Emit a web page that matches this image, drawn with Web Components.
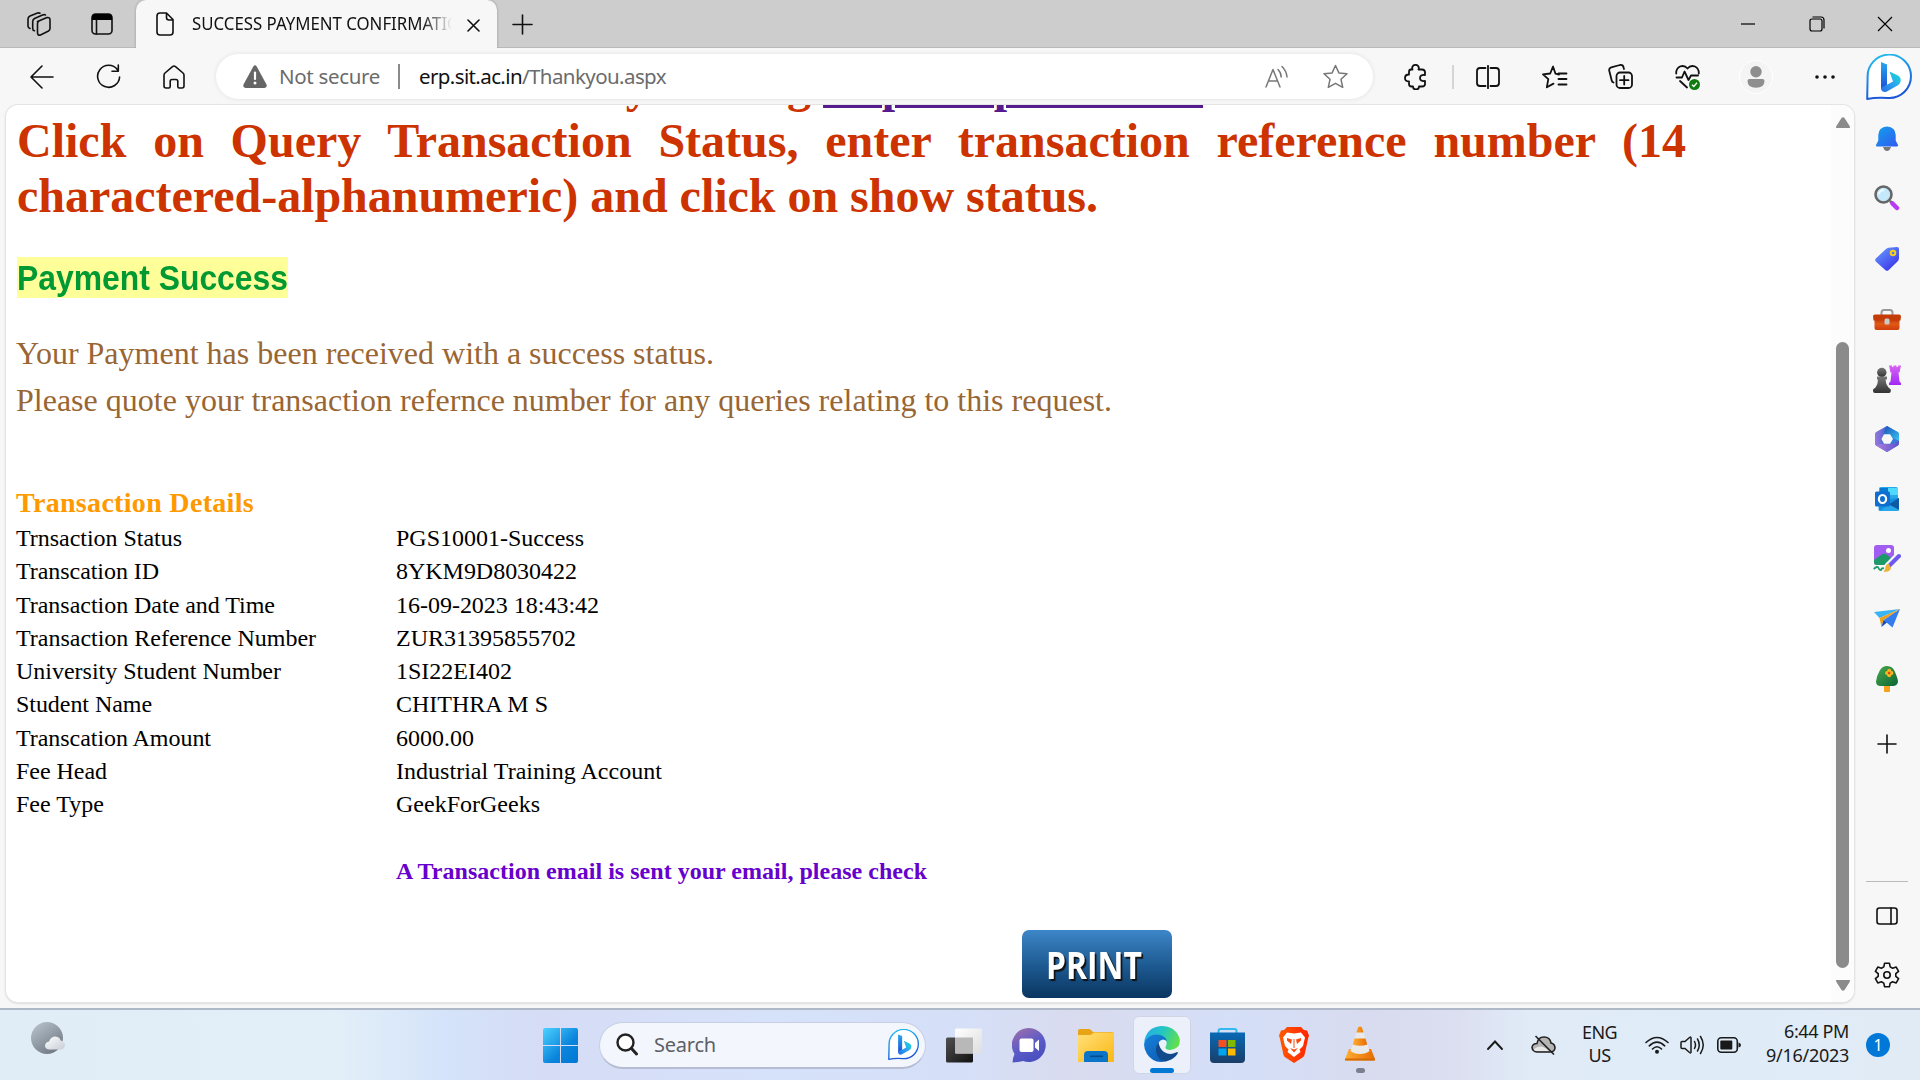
<!DOCTYPE html>
<html lang="en">
<head>
<meta charset="utf-8">
<title>SUCCESS PAYMENT CONFIRMATION</title>
<style>
html,body{margin:0;padding:0;width:1920px;height:1080px;overflow:hidden;background:#f7f7f7}
</style>
</head>
<body>
<desktop-screen></desktop-screen>
<script>
const define = (name, html, ready) => {
  const t = document.createElement('template');
  t.innerHTML = html;
  customElements.define(name, class extends HTMLElement {
    constructor() {
      super();
      this.attachShadow({mode: 'open'}).append(t.content.cloneNode(true));
    }
    connectedCallback() { if (ready) ready(this); }
  });
};

/* ---------- icon artwork ---------- */
const bing = `<defs><linearGradient id="o" x1="0" y1="0" x2=".3" y2="1"><stop offset="0" stop-color="#22c5ee"/><stop offset="1" stop-color="#1b55d8"/></linearGradient><linearGradient id="i" x1="0" y1="0" x2="0" y2="1"><stop offset="0" stop-color="#27a8ee"/><stop offset="1" stop-color="#1b4fd6"/></linearGradient><linearGradient id="j" x1="1" y1="0" x2="0" y2="1"><stop offset="0" stop-color="#1be0d2"/><stop offset=".5" stop-color="#2aa5ee"/><stop offset="1" stop-color="#2a6be8"/></linearGradient></defs>
<path d="M1.2 45 L1.6 23 A21.7 21.7 0 1 1 23 44 C17 43.6 10 43 1.2 45Z" fill="#fff" stroke="url(#o)" stroke-width="2" stroke-linejoin="round"/>
<path d="M15 8 L21 10.5 V31 L15 35.500Z" fill="url(#i)"/><path d="M23.500 17.500 L32 21.500 C36 24 35.500 29 31.500 31.500 L20 38 C17 38.500 15 37 15 34 L27 27.500Z" fill="url(#j)"/>`;
const S = 'fill="none" stroke="#111" stroke-width="1.6" stroke-linecap="round" stroke-linejoin="round"';
const B = 'fill="none" stroke="#111" stroke-width="1.8" stroke-linecap="round" stroke-linejoin="round"';
const ICONS = {
  workspaces: [24,24,`<g ${S}><path d="M10.500 9.500 L20 5.600 Q23 5 23 8 V16.500 Q23 18 21.500 19 L13.500 23 Q10.500 23.800 10.500 20.500 V11.500 Q10.500 10 12 9Z"/><path d="M7.500 18.700 Q5.700 18.500 5.700 16.500 V9.500 Q5.700 7.500 7.500 6.500 L15.500 3 Q17.500 2.200 18.500 3"/><path d="M3 16.500 Q1 16 1 14 V7 Q1 5 3 4 L10.500 1 Q12 .6 13 1.200"/></g>`],
  tabs: [22,22,`<rect x="1" y="1" width="20" height="20" rx="3.500" ${S}/><path d="M1 7V4Q1 1 4 1H18Q21 1 21 4V7Z" fill="#000"/><path d="M5.500 7V21" ${S}/>`],
  doc: [18,24,`<path d="M1 4Q1 1 4 1H10.500L17 7.500V20Q17 23 14 23H4Q1 23 1 20ZM10.500 1V5.500Q10.500 8 13 8H17" ${S}/>`],
  x: [13,13,`<path d="M1 1L12 12M12 1L1 12" ${S}/>`],
  plus: [21,21,`<path d="M10.500 1V20M1 10.500H20" ${S}/>`],
  min: [16,16,`<path d="M1 8H15" stroke="#000" stroke-width="1.200"/>`],
  max: [16,16,`<path d="M1 5Q1 3 3 3H11Q13 3 13 5V13Q13 15 11 15H3Q1 15 1 13ZM3.500 1H12Q15 1 15 4V12.500" fill="none" stroke="#000" stroke-width="1.200"/>`],
  close: [16,16,`<path d="M1 1L15 15M15 1L1 15" stroke="#000" stroke-width="1.200"/>`],
  back: [24,24,`<path d="M23 12H1M12 1L1 12L12 23" ${S}/>`],
  refresh: [25,25,`<path d="M21.500 5.800A11 11 0 1 0 23.600 13M22.300 1V7.200H16" ${S}/>`],
  home: [22,24,`<path d="M1 10.200Q1 9 2 8L9.500 1.600Q11 .4 12.500 1.600L20 8Q21 9 21 10.200V21Q21 23 19 23H16.200Q14.800 23 14.800 21.500V16.500Q14.800 14.500 13 14.500H9Q7.200 14.500 7.200 16.500V21.500Q7.200 23 5.800 23H3Q1 23 1 21Z" ${S}/>`],
  warn: [24,23,`<path d="M10.300 1.400Q12 -1 13.700 1.400L23.500 19.500Q24.500 22.500 21.500 23H2.500Q-.5 22.500 .5 19.500Z" fill="#666"/><path d="M12 7.500V14" stroke="#fff" stroke-width="2.200" stroke-linecap="round"/><circle cx="12" cy="18" r="1.500" fill="#fff"/>`],
  aloud: [23,24,`<g fill="none" stroke="#777" stroke-width="1.500" stroke-linecap="round" stroke-linejoin="round"><path d="M1 22L8 4.500L15 22M3.500 16H12.500"/><path d="M13 4.500Q16 7.500 16.200 12M17 1.500Q21.500 6 22 12"/></g>`],
  star: [25,25,`<path d="M12.500 1.500L15.900 8.900L24 9.800L18 15.300L19.700 23.300L12.500 19.300L5.300 23.300L7 15.300L1 9.800L9.100 8.900Z" fill="none" stroke="#777" stroke-width="1.500" stroke-linejoin="round"/>`],
  puzzle: [24,26,`<path d="M7 5.500H8.500A3.300 3.300 0 1 1 14.500 5.500H18Q21 5.500 21 8.500V11Q16 10.500 16 14Q16 17.500 21 17V20Q21 22.500 18 22.500H15A3 3 0 1 1 9 22.500H7.500Q5 22.500 5 20V17.500Q1 17.500 1 14Q1 10.500 5 10.500V8Q5 5.500 7 5.500Z" ${B}/>`],
  vline: [2,24,`<path d="M1 0V24" stroke="#ccc" stroke-width="1.600"/>`],
  split: [24,24,`<path d="M9.500 3H4Q1 3 1 6V18Q1 21 4 21H9.500M14.500 3H20Q23 3 23 6V18Q23 21 20 21H14.500M12 .8V23.200" ${B}/>`],
  favs: [26,24,`<path d="M17 9.500L13.500 8.700L11 1.500L8.200 8.500L1 9.300L6.300 14.200L4.800 22.300L11.500 18.600M16.500 8.500H24.500M16.500 14H24.500M16.500 19.500H24.500" ${B}/>`],
  collect: [25,25,`<rect x="8.500" y="8.500" width="15.500" height="15.500" rx="3.500" ${B}/><path d="M16.200 12V20.500M12 16.200H20.500M5.500 18.500Q4 18 3.700 16.500L1.200 6.500Q.8 4 3.200 3.300L12 1Q15 .5 15.600 3.500L16 5" ${B}/>`],
  heart: [26,26,`<path d="M1.200 9.500Q1 4.500 5 2.500Q9.500 .8 12.500 4.500Q15.500 .8 20 2.500Q24 4.500 23.800 9.500M1.500 13.500H7L9.500 7.500L13.500 16L16 11.500H23M5 17L12 23.500" ${B}/><circle cx="19.500" cy="20.500" r="5.500" fill="#107c10"/><path d="M17 20.700L18.800 22.400L22 18.800" fill="none" stroke="#fff" stroke-width="1.400"/>`],
  avatar: [34,34,`<circle cx="17" cy="17" r="16.500" fill="#f4f4f4" stroke="#fff"/><circle cx="17" cy="11.800" r="5.700" fill="#8e8e8e"/><path d="M8.500 21Q8.500 19 10.500 19H23.500Q25.500 19 25.500 21Q25.500 27.700 17 27.700Q8.500 27.700 8.500 21Z" fill="#8e8e8e"/>`],
  dots: [20,6,`<g fill="#111"><circle cx="2" cy="3" r="1.800"/><circle cx="10" cy="3" r="1.800"/><circle cx="18" cy="3" r="1.800"/></g>`],
  bing: [46,46,bing],
  bell: [22,26,`<defs><linearGradient id="a" x1="0" y1="0" x2="1" y2="1"><stop offset="0" stop-color="#12a0ec"/><stop offset="1" stop-color="#315bf0"/></linearGradient></defs><path d="M7 21H15L13.500 24Q11 26 8.500 24Z" fill="#777"/><path d="M2.300 9Q2.500 1 11 .5Q19.500 1 19.700 9V14.500L22 19Q22.200 20.300 21 20.500H1Q-.2 20.300 0 19L2.300 14.500Z" fill="url(#a)"/>`],
  search: [26,26,`<path d="M16 16L19 19" stroke="#666" stroke-width="2.500"/><path d="M18.500 18.500L23 23" stroke="#b93af5" stroke-width="4.500" stroke-linecap="round"/><circle cx="9.500" cy="9.500" r="8" fill="#c5e8fb" stroke="#666" stroke-width="2.600"/><path d="M5 9Q6 5 10 5" stroke="#f0faff" stroke-width="2" fill="none"/>`],
  tag: [24,24,`<defs><linearGradient id="a" x1="0" y1="0" x2=".8" y2="1"><stop offset="0" stop-color="#68a4ff"/><stop offset="1" stop-color="#3b2fe8"/></linearGradient></defs><path d="M13.500 .8L22 0Q24 0 24 2V11Q24 13 22.500 14.500L13.500 23.200Q12 24.500 10.500 23.200L.8 14.500Q-.5 13 .8 11.500L11 2Q12 1 13.500 .8Z" fill="url(#a)"/><circle cx="18" cy="6" r="2.300" fill="#5c74ef" stroke="#f7d215" stroke-width="2"/>`],
  brief: [28,21,`<defs><linearGradient id="a" x1="0" y1="0" x2="0" y2="1"><stop offset="0" stop-color="#ba3205"/><stop offset=".5" stop-color="#e25a17"/><stop offset="1" stop-color="#cf3c0c"/></linearGradient></defs><path d="M8.500 6V3.500Q8.500 1 11 1H17Q19.500 1 19.500 3.500V6" fill="none" stroke="#999" stroke-width="2"/><rect x="1.500" y="9" width="25" height="12" rx="2" fill="url(#a)"/><path d="M2 5.500H26Q28 5.500 28 7.500L27.500 11.500H.5L0 7.500Q0 5.500 2 5.500Z" fill="#c43c08"/><rect x="11.500" y="9.500" width="5" height="6" rx="1.500" fill="#c9c9c9"/>`],
  chess: [28,28,`<defs><linearGradient id="a" x1="0" y1="0" x2="0" y2="1"><stop offset="0" stop-color="#d763f2"/><stop offset="1" stop-color="#a229f6"/></linearGradient><linearGradient id="b" x1="0" y1="0" x2="0" y2="1"><stop offset="0" stop-color="#777"/><stop offset="1" stop-color="#333"/></linearGradient></defs><path d="M16 .5H19V2H20.500V.5H23.500V2H25V.5H28L26.500 7.500H25.500L26.500 16.500L28 18V20H16V18L17.500 16.500L18.500 7.500H17.500Z" fill="url(#a)"/><circle cx="8.800" cy="7.500" r="4.700" fill="url(#b)"/><path d="M4 11.500H14V14.500H12.500Q12.500 19 15.500 22.500L17.800 24.500V26Q17.800 28 16 28H2Q0 28 0 26V24.500L2.500 22.500Q5 19 5 14.500H4Z" fill="url(#b)"/>`],
  m365: [24,26,`<defs><linearGradient id="a" x1="0" y1="0" x2="1" y2="0"><stop offset="0" stop-color="#b07be0"/><stop offset="1" stop-color="#5a56c8"/></linearGradient><linearGradient id="b" x1="0" y1="0" x2="1" y2="1"><stop offset="0" stop-color="#1d52b8"/><stop offset="1" stop-color="#38c5f6"/></linearGradient></defs><path d="M12 0L23 6.200Q24 7 24 8.500V17Q24 18.500 23 19.300L12 26L1 19.500Q0 18.500 0 17V8.500Q0 7 1 6.200Z" fill="#3a78d8"/><path d="M12 0L23 6.200Q24 7 24 8.500V15L16 11L9 8Q8.500 4 12 0Z" fill="url(#b)"/><path d="M12 0Q8 4 8.500 9L7 18Q4 20 1 19.500Q0 18.500 0 17V8.500Q0 7 1 6.200Z" fill="url(#a)" opacity=".75"/><path d="M24 14Q22 17 17 18H5L1 19.500L11 25.600Q12 26.200 13 25.600L23 19.500Q24 18.500 24 17Z" fill="url(#a)"/><path d="M9 8.200H15L18 13L15 17.800H9L6.500 13Z" fill="#f7f7f7"/>`],
  outlook: [24,24,`<path d="M6 0H21Q23 0 23 2V12H4V2Q4 0 6 0Z" fill="#28a8ea"/><path d="M13 1H23V8H13Z" fill="#50d9ff"/><path d="M5 1H13V8H5Z" fill="#0a78d0"/><path d="M4 13L24 11V22Q24 24 22 24H5Q3.500 24 3.500 22Z" fill="#1490df"/><path d="M24 11L13.500 17.500L24 23Z" fill="#0f5aa5"/><path d="M14 17.500L24 23Q23.500 24 22 24H5Z" fill="#28a8ea"/><rect x="0" y="4.500" width="15" height="15" rx="1.500" fill="#0f6fd0"/><ellipse cx="7.500" cy="12" rx="3.600" ry="4" fill="none" stroke="#fff" stroke-width="2.200"/>`],
  designer: [28,28,`<rect x="1" y="0" width="20" height="20" rx="3" fill="#a15cf0"/><path d="M1 15Q5 12 9.500 9Q12 8 14.500 10L20 15L17 20H4Q1 20 1 17Z" fill="#1d9a68"/><circle cx="15.500" cy="5.500" r="2.500" fill="#fff"/><path d="M14 22L25 11" stroke="#f7f7f7" stroke-width="7"/><path d="M16.500 20.500L26 11" stroke="#6d59ef" stroke-width="4" stroke-linecap="round"/><path d="M18 23Q17 27.500 10.500 26.500Q13 24.500 12.500 22Q13 18.500 16 19Z" fill="#eeb033"/><path d="M.7 24Q4.500 20.500 5.500 23T8 25Q9 22.500 11 23.500" fill="none" stroke="#1d9a68" stroke-width="1.800"/>`],
  plane: [26,19,`<path d="M0 3L26 0L5.500 9Z" fill="#3ab4f3"/><path d="M26 0L18.500 18.500L9.500 11Z" fill="#347df0"/><path d="M5.500 9L26 0L9.500 11L7.500 18Z" fill="#eda01b"/><path d="M7.500 18L9.500 11L13 13.500Z" fill="#1750b5"/>`],
  tree: [22,26,`<defs><linearGradient id="a" x1="0" y1="0" x2="1" y2="1"><stop offset="0" stop-color="#4aa94c"/><stop offset="1" stop-color="#0b6535"/></linearGradient></defs><path d="M8 18H14V25Q14 26 13 26H9Q8 26 8 25Z" fill="#f5a11b"/><path d="M11 0Q17 0 19 6Q22 13 22 16Q21 20 17 20H5Q0 20 0 15.500Q1 9 3.500 5Q6 0 11 0Z" fill="url(#a)"/><g fill="#f6b51d"><circle cx="13.200" cy="4.800" r="2"/><circle cx="13.200" cy="9.200" r="2"/><circle cx="11" cy="7" r="2"/><circle cx="15.400" cy="7" r="2"/></g><circle cx="13.200" cy="7" r="1.300" fill="#d8441b"/>`],
  plus2: [20,20,`<path d="M10 1V19M1 10H19" ${S}/>`],
  panel: [22,18,`<rect x="1" y="1" width="20" height="16" rx="2.500" ${S}/><path d="M15 1V17" ${S}/>`],
  gear: [26,26,`<path d="M10.600 1.200H15.400L16.200 4.900L18.600 6.300L22.200 5.100L24.600 9.300L21.800 11.700V14.300L24.600 16.700L22.200 20.900L18.600 19.700L16.200 21.100L15.400 24.800H10.600L9.800 21.100L7.400 19.700L3.800 20.900L1.400 16.700L4.200 14.300V11.700L1.400 9.300L3.800 5.100L7.400 6.300L9.800 4.900Z" ${S}/><circle cx="13" cy="13" r="3.200" ${S}/>`],
  up: [14,11,`<path d="M0 11Q0 9 1 8L5.500 1Q7 -.6 8.500 1L13 8Q14 9 14 11Z" fill="#8b8b8b"/>`],
  down: [14,11,`<path d="M0 0Q0 2 1 3L5.500 10Q7 11.600 8.500 10L13 3Q14 2 14 0Z" fill="#8b8b8b"/>`],
  weather: [34,33,`<defs><linearGradient id="a" x1="0" y1="0" x2=".7" y2="1"><stop offset="0" stop-color="#bcc7d2"/><stop offset="1" stop-color="#717a83"/></linearGradient><linearGradient id="b" x1="0" y1="0" x2="1" y2="1"><stop offset="0" stop-color="#fff"/><stop offset="1" stop-color="#c6cdd5"/></linearGradient></defs><circle cx="16" cy="16" r="16" fill="url(#a)"/><path d="M18 27.500Q14 27 14 23.500Q14.500 20 18 19.500Q20 14.500 24.500 14.500Q29 15 29.500 18.500Q34 19 34 23Q33.500 27 30 27.500Z" fill="url(#b)"/>`],
  windows: [35,35,`<defs><linearGradient id="a" gradientUnits="userSpaceOnUse" x1="0" y1="0" x2="35" y2="35"><stop offset="0" stop-color="#4cd2ff"/><stop offset=".6" stop-color="#0a84dc"/><stop offset="1" stop-color="#0078d4"/></linearGradient></defs><path d="M2 0H17V17H0V2Q0 0 2 0ZM18 0H33Q35 0 35 2V17H18ZM0 18H17V35H2Q0 35 0 33ZM18 18H35V33Q35 35 33 35H18Z" fill="url(#a)"/>`],
  find: [22,23,`<circle cx="9.500" cy="9.500" r="8" fill="#fff" stroke="#222" stroke-width="2.400"/><path d="M15.500 15.500L20.500 21" stroke="#222" stroke-width="3" stroke-linecap="round"/>`],
  taskview: [36,35,`<defs><linearGradient id="a" x1="0" y1="0" x2="1" y2="1"><stop offset="0" stop-color="#505050"/><stop offset="1" stop-color="#111"/></linearGradient><linearGradient id="b" x1="0" y1="0" x2="1" y2="1"><stop offset="0" stop-color="#fff"/><stop offset="1" stop-color="#ddd"/></linearGradient></defs><rect y="9.500" width="27" height="25" rx="1.500" fill="url(#a)"/><rect x="9" y=".5" width="27" height="25" rx="1.500" fill="url(#b)"/><path d="M9 9.500H27V25.500H10Q9 25.500 9 24.500Z" fill="#b8b8b8"/>`],
  chat: [34,35,`<defs><linearGradient id="a" x1="0" y1="0" x2=".5" y2="1"><stop offset="0" stop-color="#a570a8"/><stop offset=".6" stop-color="#5b5bc8"/><stop offset="1" stop-color="#4a50c0"/></linearGradient></defs><path d="M17 0A17 17 0 1 1 11 33Q6 34.500 .5 34.500Q1 29 2.500 26A17 17 0 0 1 17 0Z" fill="url(#a)"/><rect x="7.500" y="10.500" width="14" height="13.500" rx="2" fill="#fff"/><path d="M23 15L27 11.500V23L23 19.500Z" fill="#fff"/>`],
  folder: [36,33,`<defs><linearGradient id="a" x1="0" y1="0" x2="1" y2="1"><stop offset="0" stop-color="#ffe07a"/><stop offset="1" stop-color="#fcb713"/></linearGradient></defs><path d="M0 2Q0 0 2 0H11Q12 0 13 1L15 3H34Q36 3 36 5V8H0Z" fill="#e8a317"/><path d="M0 6H12Q13 6 14 5L16 3.500H36V33H0Z" fill="url(#a)"/><path d="M6 33V26Q6 22 10 22H26Q30 22 30 26V33Z" fill="#0b74c8"/><path d="M12 27.300H25" stroke="#064d8f" stroke-width="1.600"/>`],
  edge: [36,36,`<defs><linearGradient id="a" x1="0" y1=".2" x2="1" y2=".5"><stop offset="0" stop-color="#25a9ec"/><stop offset=".5" stop-color="#25c7c0"/><stop offset="1" stop-color="#62e04b"/></linearGradient><linearGradient id="b" x1="0" y1="0" x2=".5" y2="1"><stop offset="0" stop-color="#1682d8"/><stop offset="1" stop-color="#0d62bd"/></linearGradient></defs><path d="M0 17Q2 1 17.500 0Q31 0 35.500 12Q37.500 23 26 24Q21 24 21.500 21Q25 15 18 11Q8 7.500 0 17Z" fill="url(#a)"/><path d="M0 18Q3 8.500 13 8.500Q21 9 23 15Q18 11.500 15 16Q11 20 13 27Q16 34 23 35Q10 38.500 3 28Q0 23.500 0 18Z" fill="url(#b)"/><path d="M14.500 16Q10 22 13 29Q17 37 24 34.700Q31 32.500 34 27Q33.500 25.500 32 26.500Q26 29.500 20 26Q15.500 23 14.500 16Z" fill="#114a8b"/>`],
  store: [35,35,`<defs><linearGradient id="a" x1="0" y1="0" x2="0" y2="1"><stop offset="0" stop-color="#0869b5"/><stop offset="1" stop-color="#1b3e68"/></linearGradient></defs><path d="M8.500 5V3Q8.500 1 10.500 1H24.500Q26.500 1 26.500 3V5" fill="none" stroke="#33b8ef" stroke-width="2"/><path d="M0 4.500H35V31Q35 35 31 35H4Q0 35 0 31Z" fill="url(#a)"/><path d="M8.500 12H16.500V19H8.500Z" fill="#f25022"/><path d="M18 12H25.500V19H18Z" fill="#7fba00"/><path d="M8.500 20.500H16.500V27.500H8.500Z" fill="#00a4ef"/><path d="M18 20.500H25.500V27.500H18Z" fill="#ffb900"/>`],
  brave: [30,36,`<defs><linearGradient id="a" x1="0" y1="0" x2="1" y2="0"><stop offset="0" stop-color="#ff5a00"/><stop offset="1" stop-color="#ff2500"/></linearGradient></defs><path d="M8 0H22L25 3L28 3.500L30 8.500L29 12L25.500 28Q25 29.500 23.500 30.500L15 36L6.500 30.500Q5 29.500 4.500 28L1 12L0 8.500L2 3.500L5 3Z" fill="url(#a)"/><path d="M8 5.500L15 6.500L22 5.500L26 10.500L24 19L20.500 22.500L21.500 25L15 30L8.500 25L9.500 22.500L6 19L4 10.500Z" fill="#fff"/><path d="M8 11L13 12.500L12 17L8 13.500ZM22 11L17 12.500L18 17L22 13.500ZM11 21L15 22.500L19 21L15 25.500Z" fill="#fb4a10"/><path d="M15 12V21" stroke="#fb4a10" stroke-width="1"/>`],
  vlc: [30,35,`<defs><linearGradient id="a" x1="0" y1="0" x2="1" y2="0"><stop offset="0" stop-color="#ffae35"/><stop offset="1" stop-color="#e66b00"/></linearGradient></defs><path d="M4 23H26L30 33Q30 34.500 28.500 34.500H1.500Q0 34.500 0 33Z" fill="url(#a)"/><path d="M13 1.500Q15 -.5 17 1.500L24.500 25Q21 28 15 28Q9 28 5.500 25Z" fill="#e9e9e9"/><path d="M13 1.500Q15 -.5 17 1.500L18.500 6.500H11.300ZM9.500 12.500H20.500L22.300 18.500Q15 21 7.700 18.500Z" fill="url(#a)"/><path d="M0 32.500H30V34.500H0Z" fill="#d36b06"/>`],
  chevron: [16,10,`<path d="M1 9L8 1.500L15 9" fill="none" stroke="#1a1a1a" stroke-width="1.900" stroke-linecap="round"/>`],
  cloud: [25,20,`<path d="M6 17Q1.500 16.500 1 12.500Q1.500 8.500 6 8.500Q7 2 13 2Q19 2 20 8Q24 9 24 13Q23.500 17 19 17Z" fill="#b5b5b5" stroke="#222" stroke-width="1.600"/><path d="M3 14Q10 8 18 16H6Q3 16 3 14Z" fill="#e8e8e8"/><path d="M4.500 1L23 19.500" stroke="#222" stroke-width="1.600"/>`],
  wifi: [24,18,`<g fill="none" stroke="#1a1a1a" stroke-width="1.600" stroke-linecap="round"><path d="M1 6.500Q12 -3.500 23 6.500M4.300 9.800Q12 2.500 19.700 9.800M7.500 13Q12 8.500 16.500 13"/></g><circle cx="12" cy="15.800" r="2" fill="#1a1a1a"/>`],
  volume: [25,20,`<path d="M1 7.500Q1 6.500 2 6.500H5L9.500 2.500Q11 1.500 11 3V17Q11 18.500 9.500 17.500L5 13.500H2Q1 13.500 1 12.500ZM14.500 6.500Q16.500 10 14.500 13.500M17.500 4Q21 10 17.500 16M20.500 1.500Q26 10 20.500 18.500" fill="none" stroke="#1a1a1a" stroke-width="1.500" stroke-linecap="round"/>`],
  battery: [24,16,`<rect x=".8" y=".8" width="19.500" height="14.400" rx="3.500" fill="none" stroke="#1a1a1a" stroke-width="1.600"/><rect x="3.300" y="3.500" width="12" height="9" rx="1" fill="#1a1a1a"/><path d="M21.500 5.500Q24 6 24 8T21.500 10.500Z" fill="#1a1a1a"/>`]
};
define('ui-icon', `<style>:host{display:block;flex:none}div{height:100%}svg{display:block;width:100%;height:100%}</style><div></div>`, el => {
  const [w, h, art] = ICONS[el.getAttribute('name')];
  const k = +(el.getAttribute('size') || w) / w;
  el.style.width = w * k + 'px';
  el.style.height = h * k + 'px';
  el.shadowRoot.querySelector('div').innerHTML = `<svg viewBox="0 0 ${w} ${h}">${art}</svg>`;
});

/* one line of text that spans a given width: tuned by tracking, or by glyph width with [stretch] */
define('fit-text', `<style>:host{display:block;white-space:pre;flex:none}span{display:inline-block;transform-origin:0 50%}</style><span><slot></slot></span>`, el => {
  const span = el.shadowRoot.querySelector('span'), n = el.textContent.length;
  const w = +el.getAttribute('w'), natural = span.getBoundingClientRect().width;
  if (el.hasAttribute('stretch')) {
    span.style.transform = `scaleX(${w / natural})`;
    el.style.width = w + 'px';
  } else span.style.letterSpacing = (w - natural) / n + 'px';
});

define('tab-strip', `<style>
:host{display:flex;height:48px;background:#cdcdcd;align-items:center;font:18px/24px "Noto Sans",sans-serif;color:#111;box-shadow:inset 0 -1px #b9b9b9}
.tab{align-self:stretch;width:361px;box-sizing:border-box;margin-left:23px;background:#f7f7f7;border-radius:10px 10px 0 0;display:flex;align-items:center;padding-left:20px;box-shadow:0 0 3px #0004;clip-path:inset(0 -3px 0 -3px)}
.t{width:260px;overflow:hidden;margin:0 0 3px 18px;-webkit-mask:linear-gradient(90deg,#000 230px,transparent)}
</style>
<ui-icon name="workspaces" style="margin-left:27px"></ui-icon>
<ui-icon name="tabs" style="margin-left:40px"></ui-icon>
<div class="tab"><ui-icon name="doc"></ui-icon><div class="t"><fit-text w="281" stretch>SUCCESS PAYMENT CONFIRMATION</fit-text></div><ui-icon name="x" style="margin:2px 0 0 15px"></ui-icon></div>
<ui-icon name="plus" style="margin-left:15px"></ui-icon>
<ui-icon name="min" style="margin-left:auto"></ui-icon>
<ui-icon name="max" style="margin-left:53px"></ui-icon>
<ui-icon name="close" style="margin:0 27px 0 52px"></ui-icon>`);

define('tool-bar', `<style>
:host{display:flex;height:57px;align-items:center;background:#f7f7f7;font:20.500px/28px "Noto Sans",sans-serif;color:#6b6b6b}
.addr{width:1157px;height:45px;box-sizing:border-box;margin-left:31px;border-radius:23px;background:#fff;display:flex;align-items:center;padding-left:27px;box-shadow:0 0 5px #00000018}
.bar{width:2px;height:25px;background:#8a8a8a;margin:0 19px 0 18px}
fit-text{margin-bottom:2px}
</style>
<ui-icon name="back" style="margin-left:30px"></ui-icon>
<ui-icon name="refresh" style="margin-left:42px"></ui-icon>
<ui-icon name="home" style="margin-left:42px"></ui-icon>
<div class="addr"><ui-icon name="warn"></ui-icon><fit-text w="101" style="margin-left:12px">Not secure</fit-text><div class="bar"></div><fit-text w="103" style="color:#111">erp.sit.ac.in</fit-text><fit-text w="144">/Thankyou.aspx</fit-text><ui-icon name="aloud" style="margin-left:599px"></ui-icon><ui-icon name="star" style="margin-left:35px"></ui-icon></div>
<ui-icon name="puzzle" style="margin-left:31px"></ui-icon>
<ui-icon name="vline" style="margin-left:24px"></ui-icon>
<ui-icon name="split" style="margin-left:22px"></ui-icon>
<ui-icon name="favs" style="margin-left:42px"></ui-icon>
<ui-icon name="collect" style="margin-left:40px"></ui-icon>
<ui-icon name="heart" style="margin-left:42px"></ui-icon>
<ui-icon name="avatar" style="margin-left:38px"></ui-icon>
<ui-icon name="dots" style="margin-left:42px"></ui-icon>
<ui-icon name="bing" style="margin-left:31px"></ui-icon>`);

define('side-bar', `<style>
:host{display:flex;flex-direction:column;width:66px;height:903px;align-items:center;box-sizing:border-box;padding-right:1px}
.hr{width:42px;height:1px;background:#bbb;margin-top:127px;flex:none}
</style>
<ui-icon name="bell" style="margin-top:21px"></ui-icon>
<ui-icon name="search" style="margin-top:33px"></ui-icon>
<ui-icon name="tag" style="margin-top:36px"></ui-icon>
<ui-icon name="brief" style="margin-top:38px"></ui-icon>
<ui-icon name="chess" style="margin-top:35px"></ui-icon>
<ui-icon name="m365" style="margin-top:33px"></ui-icon>
<ui-icon name="outlook" style="margin-top:35px"></ui-icon>
<ui-icon name="designer" style="margin-top:34px"></ui-icon>
<ui-icon name="plane" style="margin-top:36px"></ui-icon>
<ui-icon name="tree" style="margin-top:38px"></ui-icon>
<ui-icon name="plus2" style="margin-top:42px"></ui-icon>
<div class="hr"></div>
<ui-icon name="panel" style="margin-top:25px"></ui-icon>
<ui-icon name="gear" style="margin-top:37px"></ui-icon>`);

define('detail-row', `<style>:host{display:flex;height:33.250px;line-height:33.250px}div{width:380px}</style><div><slot name="k"></slot></div><slot></slot>`);

const rows = [
  ['Trnsaction Status',166,'PGS10001-Success',188],
  ['Transcation ID',143,'8YKM9D8030422',181],
  ['Transaction Date and Time',259,'16-09-2023 18:43:42',203],
  ['Transaction Reference Number',300,'ZUR31395855702',180],
  ['University Student Number',265,'1SI22EI402',116],
  ['Student Name',136,'CHITHRA M S',152],
  ['Transcation Amount',195,'6000.00',78],
  ['Fee Head',91,'Industrial Training Account',266],
  ['Fee Type',88,'GeekForGeeks',144]
].map(([k,kw,v,vw]) => `<detail-row><fit-text slot="k" w="${kw}">${k}</fit-text><fit-text w="${vw}">${v}</fit-text></detail-row>`).join('');

define('print-button', `<style>
:host{display:flex;width:150px;height:68px;box-sizing:border-box;padding-right:6px;border-radius:7px;background:linear-gradient(#3d86c8,#1c588f 55%,#0a3560);align-items:center;justify-content:center;font:bold 38px/66px "Open Sans","Noto Sans",sans-serif;color:#fff;text-shadow:2px 2px 1px #111}
</style><fit-text w="96" stretch><slot></slot></fit-text>`);

define('payment-page', `<style>
:host{display:flex;width:1848px;height:897px;box-sizing:border-box;background:#fff;border-radius:12px;overflow:hidden;font-family:"Liberation Serif",serif;box-shadow:0 0 0 1px #e4e4e4,0 1px 3px #0003}
main{width:1825px;box-sizing:border-box;padding-left:10px}
.head{margin:-47px 0 0 1px;width:1669px;font-weight:bold;font-size:48px;line-height:55px;color:#c30}
.l0{display:flex;padding-left:582px;white-space:pre}
a{color:#551a8b;text-decoration:underline;text-decoration-thickness:3px;text-underline-offset:2.500px}
.just{text-align:justify;text-align-last:justify}
.ok{margin:34px 0 0 1px;width:271px;height:41px;line-height:42px;background:#ff9;color:#093;font-family:"Liberation Sans",sans-serif;font-weight:bold;font-size:35px}
.msg{margin-top:32px;font-size:32px;line-height:47px;color:#963}
.td{margin-top:61px;font-size:28px;line-height:35px;height:37px;font-weight:bold;color:#f90}
.rows{font-size:24px;color:#000}
.mail{margin:34px 0 0 380px;font-size:24px;line-height:33px;font-weight:bold;color:#60c}
print-button{margin:42px 0 0 1006px}
.sb{width:23px;background:#fcfcfc;display:flex;flex-direction:column;align-items:center;padding-top:12px;box-sizing:border-box}
.thumb{width:13px;height:626px;border-radius:7px;background:#8b8b8b;margin:214px 0 12px}
</style>
<main>
<div class="head"><div class="l0"><span>by visiting </span><a>http://erp.sit.ac.in/</a></div><div class="just">Click on Query Transaction Status, enter transaction reference number (14</div><fit-text w="1081">charactered-alphanumeric) and click on show status.</fit-text></div>
<div class="ok"><fit-text w="271" stretch>Payment Success</fit-text></div>
<div class="msg"><fit-text w="698">Your Payment has been received with a success status.</fit-text><fit-text w="1096">Please quote your transaction refernce number for any queries relating to this request.</fit-text></div>
<div class="td"><fit-text w="238">Transaction Details</fit-text></div>
<div class="rows">${rows}</div>
<div class="mail"><fit-text w="531">A Transaction email is sent your email, please check</fit-text></div>
<print-button>PRINT</print-button>
</main>
<div class="sb"><ui-icon name="up"></ui-icon><div class="thumb"></div><ui-icon name="down"></ui-icon></div>`);

define('task-bar', `<style>
:host{display:flex;height:72px;box-sizing:border-box;border-top:2px solid #afb8c6;align-items:center;font:18px/24px "Noto Sans",sans-serif;color:#1a1a1a;background:linear-gradient(90deg,#e1edf6 0,#e2eef8 340px,#d4e3fa 450px,#d6dcf5 540px,#d6e2fa 760px,#d5e0f8 960px,#d9dbee 1080px,#d4dff8 1230px,#d9dbee 1390px,#dcdff1 1460px,#e0ebf7 1530px,#dfecf7 1750px,#e1ebf6 1920px)}
.search{display:flex;align-items:center;box-sizing:border-box;width:327px;height:47px;margin-left:21px;padding-left:16px;border-radius:24px;background:#f3f6fd;border:1px solid #c7cfe3;border-bottom:2px solid #b6bdd2;font-size:20px;color:#5c5f66}
.app{width:58px;height:58px;box-sizing:border-box;border-radius:6px;background:#ecf0fa;border:1px solid #d0d6e6;margin-left:19px;display:flex;flex-direction:column;align-items:center;padding-top:9px}
.app i{width:24px;height:5px;border-radius:3px;background:#0078d4;margin-top:6px;flex:none}
.vlc{height:57px;display:flex;flex-direction:column;align-items:center;padding-top:9px;box-sizing:border-box;margin-left:36px}
.vlc i{width:9px;height:5px;border-radius:3px;background:#7b7f8e;margin-top:7px;flex:none}
.col{display:flex;flex-direction:column;align-items:center}
.n{width:24px;height:24px;border-radius:50%;background:#0078d7;color:#fff;font-size:16px;line-height:24px;text-align:center;margin:0 30px 0 17px}
</style>
<ui-icon name="weather" style="margin:0 0 14px 31px"></ui-icon>
<ui-icon name="windows" style="margin-left:478px"></ui-icon>
<div class="search"><ui-icon name="find"></ui-icon><fit-text w="62" style="margin-left:16px">Search</fit-text><ui-icon name="bing" size="31" style="margin-left:172px"></ui-icon></div>
<ui-icon name="taskview" style="margin-left:20px"></ui-icon>
<ui-icon name="chat" style="margin-left:30px"></ui-icon>
<ui-icon name="folder" style="margin-left:32px"></ui-icon>
<div class="app"><ui-icon name="edge"></ui-icon><i></i></div>
<ui-icon name="store" style="margin-left:19px"></ui-icon>
<ui-icon name="brave" style="margin-left:34px"></ui-icon>
<div class="vlc"><ui-icon name="vlc"></ui-icon><i></i></div>
<ui-icon name="chevron" style="margin-left:112px"></ui-icon>
<ui-icon name="cloud" style="margin-left:28px"></ui-icon>
<div class="col" style="margin:0 0 2px 26px;line-height:23px"><fit-text w="35">ENG</fit-text><fit-text w="22">US</fit-text></div>
<ui-icon name="wifi" style="margin-left:28px"></ui-icon>
<ui-icon name="volume" style="margin-left:11px"></ui-icon>
<ui-icon name="battery" style="margin-left:12px"></ui-icon>
<div class="col" style="margin:0 0 4px 25px;align-items:flex-end"><fit-text w="65">6:44 PM</fit-text><fit-text w="83">9/16/2023</fit-text></div>
<div class="n">1</div>`);

define('desktop-screen', `<style>
:host{display:flex;flex-direction:column;width:1920px;height:1080px;overflow:hidden;background:#f7f7f7}
.mid{display:flex;height:903px}
payment-page{margin-left:6px}
</style><tab-strip></tab-strip><tool-bar></tool-bar><div class="mid"><payment-page></payment-page><side-bar></side-bar></div><task-bar></task-bar>`);
</script>
</body>
</html>
